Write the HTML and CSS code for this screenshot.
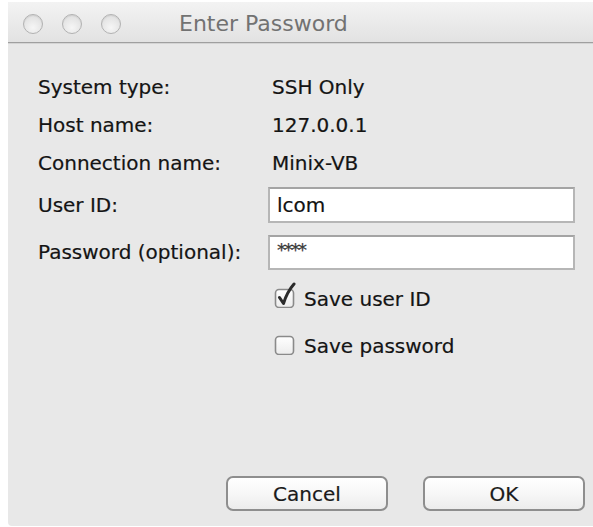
FILE: index.html
```html
<!DOCTYPE html>
<html lang="en">
<head>
<meta charset="utf-8">
<title>Enter Password</title>
<link rel="stylesheet" href="styles.css">
</head>
<body>
<div class="window">
  <header class="titlebar">
    <div class="lights">
      <span class="light"></span>
      <span class="light"></span>
      <span class="light"></span>
    </div>
    <h1 class="title">Enter Password</h1>
  </header>

  <main class="content">
    <form class="form">
      <span class="label">System type:</span>
      <span class="value">SSH Only</span>

      <span class="label">Host name:</span>
      <span class="value">127.0.0.1</span>

      <span class="label">Connection name:</span>
      <span class="value">Minix-VB</span>

      <label class="label" for="user">User ID:</label>
      <div class="cell"><input class="field" id="user" type="text" value="lcom"></div>

      <label class="label" for="pass">Password (optional):</label>
      <div class="cell"><input class="field masked" id="pass" type="text" value="****"></div>

      <span></span>
      <label class="check">
        <svg class="box" width="24" height="26" viewBox="0 0 24 26">
          <defs>
            <linearGradient id="boxfill" x1="0" y1="0" x2="0" y2="1">
              <stop offset="0" stop-color="#ffffff"/>
              <stop offset="1" stop-color="#ececec"/>
            </linearGradient>
          </defs>
          <rect x="1.5" y="7.5" width="18" height="18" rx="3.5" fill="url(#boxfill)" stroke="#8a8a8a" stroke-width="1.6"/>
          <path d="M5.5 15.5 L9.5 21.5 Q13 10 20 2" fill="none" stroke="#2b2b2b" stroke-width="3" stroke-linecap="round" stroke-linejoin="round"/>
        </svg>
        <span>Save user ID</span>
      </label>

      <span></span>
      <label class="check">
        <svg class="box" width="24" height="26" viewBox="0 0 24 26">
          <rect x="1.5" y="7.5" width="18" height="18" rx="3.5" fill="url(#boxfill)" stroke="#8a8a8a" stroke-width="1.6"/>
        </svg>
        <span>Save password</span>
      </label>
    </form>

    <div class="actions">
      <button class="btn" type="button">Cancel</button>
      <button class="btn" type="button">OK</button>
    </div>
  </main>
</div>
</body>
</html>
```

FILE: styles.css
```css
html, body {
  background: #ffffff;
}

body {
  margin: 2px 0 0 8px;
  font-family: "DejaVu Sans", "Liberation Sans", sans-serif;
  overflow: hidden;
}

.window {
  height: 524px;
  display: flex;
  flex-direction: column;
  background: #e8e8e8;
  border-bottom-left-radius: 4px;
}

/* title bar */
.titlebar {
  height: 40px;
  flex: none;
  display: flex;
  align-items: center;
  background: linear-gradient(#f3f3f3, #e2e2e2);
  border-bottom: 1px solid #9f9f9f;
  box-shadow: 0 1px 0 #d4d4d4;
}

.lights {
  display: flex;
  gap: 19px;
  margin: 4px 0 0 15px;
}

.light {
  width: 18px;
  height: 18px;
  border-radius: 50%;
  border: 1.5px solid #b2b2b2;
  background: radial-gradient(circle at 50% 70%, #f6f6f6, #dadada);
  box-shadow: inset 0 1px 1px rgba(0,0,0,0.08);
}

.title {
  margin: 3px 0 0 58px;
  font-size: 22px;
  font-weight: normal;
  color: #727272;
}

/* body of the dialog */
.content {
  flex: 1;
  display: flex;
  flex-direction: column;
  padding: 25px 8px 15px 30px;
}

.form {
  display: grid;
  grid-template-columns: 230px 307px;
  grid-template-rows: 38px 38px 38px 46px 48px 46px 48px;
  align-items: center;
  font-size: 20px;
  color: #141414;
  -webkit-text-stroke: 0.2px #141414;
}

.value {
  padding-left: 4px;
}

.cell {
  display: flex;
}

.field {
  width: 100%;
  height: 36px;
  box-sizing: border-box;
  margin: 0;
  padding: 0 7px;
  border: 2px solid #b6b6b6;
  border-top-color: #a4a4a4;
  background: #ffffff;
  font: 20px "DejaVu Sans", "Liberation Sans", sans-serif;
  color: #111111;
  -webkit-text-stroke: 0.2px #111111;
  outline: none;
}

.masked {
  height: 35px;
  font-size: 18px;
  padding-bottom: 6px;
  letter-spacing: -2px;
  color: #444444;
}

.check {
  display: flex;
  align-items: center;
  gap: 6px;
  padding-left: 6px;
}

.box {
  flex: none;
  margin-top: -8px;
}

/* buttons */
.actions {
  margin-top: auto;
  display: flex;
  justify-content: flex-end;
  gap: 35px;
}

.btn {
  width: 162px;
  height: 35px;
  border: 2px solid #8e8e8e;
  border-radius: 7px;
  background: linear-gradient(#ffffff, #f6f6f6 55%, #ececec);
  font: 20px "DejaVu Sans", "Liberation Sans", sans-serif;
  color: #1a1a1a;
  -webkit-text-stroke: 0.2px #1a1a1a;
  padding: 0;
}
```
